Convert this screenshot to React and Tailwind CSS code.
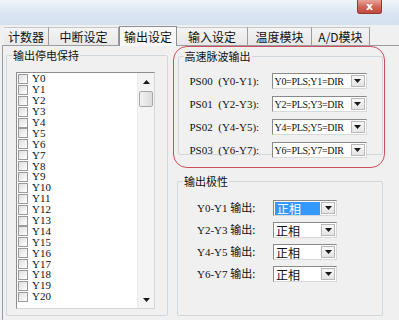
import React from 'react';

const tabs = [
  { label: '计数器', w: 'w-[45px]' },
  { label: '中断设定', w: 'w-[70px]' },
  { label: '输出设定', w: 'w-[58px]', active: true },
  { label: '输入设定', w: 'w-[71px]' },
  { label: '温度模块', w: 'w-[64px]' },
  { label: 'A/D模块', w: 'w-[58px]' },
];

const pulseRows = [
  { label: 'PS00  (Y0-Y1):', value: 'Y0=PLS;Y1=DIR' },
  { label: 'PS01  (Y2-Y3):', value: 'Y2=PLS;Y3=DIR' },
  { label: 'PS02  (Y4-Y5):', value: 'Y4=PLS;Y5=DIR' },
  { label: 'PS03  (Y6-Y7):', value: 'Y6=PLS;Y7=DIR' },
];

const polarityRows = ['Y0-Y1', 'Y2-Y3', 'Y4-Y5', 'Y6-Y7'];

const outputs = Array.from({ length: 21 }, (_, i) => `Y${i}`);

const Arrow = ({ up }) => (
  <svg width="7" height="4" viewBox="0 0 7 4" className={up ? 'rotate-180' : ''}>
    <path d="M0 0h7L3.5 4z" fill="#1a1a1a" />
  </svg>
);

const Combo = ({ value, width, selected }) => (
  <div className={`flex h-[16px] ${width} border border-[#8a8a8a] border-r-[#d8d8d8] border-b-[#d8d8d8] bg-white`}>
    <div className="flex-1 flex items-center pl-[1px] overflow-hidden">
      <span
        className={`h-[13px] leading-[13px] flex items-center whitespace-nowrap ${
          selected ? 'bg-[#3399ff] text-white w-full pl-[2px]' : 'pl-[1px]'
        }`}
      >
        {value}
      </span>
    </div>
    <div className="w-[14px] m-[1px] flex items-center justify-center border border-[#b8b8b8] bg-gradient-to-b from-[#f8f8f8] to-[#e4e4e4]">
      <Arrow />
    </div>
  </div>
);

const Group = ({ title, className, children }) => (
  <fieldset className={`border border-[#d0d7dc] rounded-[2px] ${className}`}>
    <legend className="ml-[5px] px-[1px] text-[11px] leading-[13px] font-['Noto_Sans_CJK_SC',sans-serif]">{title}</legend>
    {children}
  </fieldset>
);

export default function App() {
  return (
    <div className="w-[399px] h-[320px] overflow-hidden flex flex-col bg-[#f0f0f0] text-[#111] font-['Liberation_Serif','Noto_Sans_CJK_SC',serif]">
      {/* title bar */}
      <div className="h-[25px] relative bg-gradient-to-b from-[#f1f4f8] via-[#dce6f2] to-[#d4e0ee]">
        <div className="absolute right-[17px] top-0 w-[25px] h-[14px] rounded-b-[3px] border border-t-0 border-[#8e3b33] bg-gradient-to-b from-[#e6a49a] via-[#d0685c] to-[#c04a3b] flex items-center justify-center">
          <span className="text-white text-[11px] leading-none font-bold font-['DejaVu_Sans',sans-serif]">x</span>
        </div>
      </div>

      {/* tabs */}
      <div className="h-[20px] flex items-end pl-[4px]">
        {tabs.map((t) =>
          t.active ? (
            <div
              key={t.label}
              className={`${t.w} h-[20px] -mb-px z-10 flex items-center justify-center border border-b-0 border-[#8c8e94] bg-[#f8f8f8] text-[12px] font-['Noto_Sans_CJK_SC',sans-serif]`}
            >
              {t.label}
            </div>
          ) : (
            <div
              key={t.label}
              className={`${t.w} h-[18px] flex items-center justify-center border-t border-r border-t-[#c4c7cc] border-r-[#9a9ca2] bg-gradient-to-b from-[#f4f4f4] to-[#e8e8e8] text-[12px] font-['Noto_Sans_CJK_SC',sans-serif]`}
            >
              {t.label}
            </div>
          )
        )}
      </div>

      {/* page */}
      <div className="flex-1 flex border-t border-l border-[#9a9ca2] ml-[2px] pl-[3px]">
        {/* left group */}
        <Group title="输出停电保持" className="w-[162px] h-[267px] mt-[3px]">
          <div className="ml-[9px] mt-[10px] w-[139px] h-[237px] flex border border-[#8a8d92] border-r-[#d6d6d6] border-b-[#d6d6d6] bg-white">
            <div className="flex-1 pt-[0.5px] pl-[1px]">
              {outputs.map((o) => (
                <div key={o} className="h-[10.9px] flex items-center gap-[4px]">
                  <span className="w-[10px] h-[10px] border border-[#9a9a9a] bg-gradient-to-br from-[#dedede] to-white" />
                  <span className="text-[11px] leading-none">{o}</span>
                </div>
              ))}
            </div>
            <div className="w-[17px] flex flex-col bg-[#f4f4f4] border-l border-[#ececec]">
              <div className="h-[17px] flex items-center justify-center">
                <Arrow up />
              </div>
              <div className="mx-[1px] mt-[1px] h-[16px] rounded-[2px] border border-[#a7a7a7] bg-gradient-to-r from-[#f2f2f2] to-[#dcdcdc]" />
              <div className="flex-1" />
              <div className="h-[17px] flex items-center justify-center">
                <Arrow />
              </div>
            </div>
          </div>
        </Group>

        {/* right column */}
        <div className="ml-[5px] w-[212px] flex flex-col">
          <div className="h-[122px] rounded-[14px] border-[1.5px] border-[#cc4f5c] pt-[3px] pl-[3.5px] pr-[1.5px]">
            <Group title="高速脉波输出" className="h-[105px]">
              <div className="ml-[11px] mt-[10px] flex flex-col gap-[7px]">
                {pulseRows.map((r) => (
                  <div key={r.label} className="flex items-center h-[16px]">
                    <span className="w-[82px] text-[11px] whitespace-pre">{r.label}</span>
                    <div className="text-[10px] tracking-[-0.3px]">
                      <Combo value={r.value} width="w-[95px]" />
                    </div>
                  </div>
                ))}
              </div>
            </Group>
          </div>

          <Group title="输出极性" className="ml-[4px] mt-[7px] h-[141px] w-[206px]">
            <div className="ml-[19px] mt-[12px] flex flex-col gap-[6px]">
              {polarityRows.map((r, i) => (
                <div key={r} className="flex items-center h-[16px]">
                  <span className="w-[76px] text-[11px] whitespace-nowrap">
                    {r} <span className="font-['Noto_Sans_CJK_SC',sans-serif]">输出:</span>
                  </span>
                  <div className="text-[12px] font-['Noto_Sans_CJK_SC',sans-serif]">
                    <Combo value="正相" width="w-[64px]" selected={i === 0} />
                  </div>
                </div>
              ))}
            </div>
          </Group>
        </div>
      </div>
    </div>
  );
}
